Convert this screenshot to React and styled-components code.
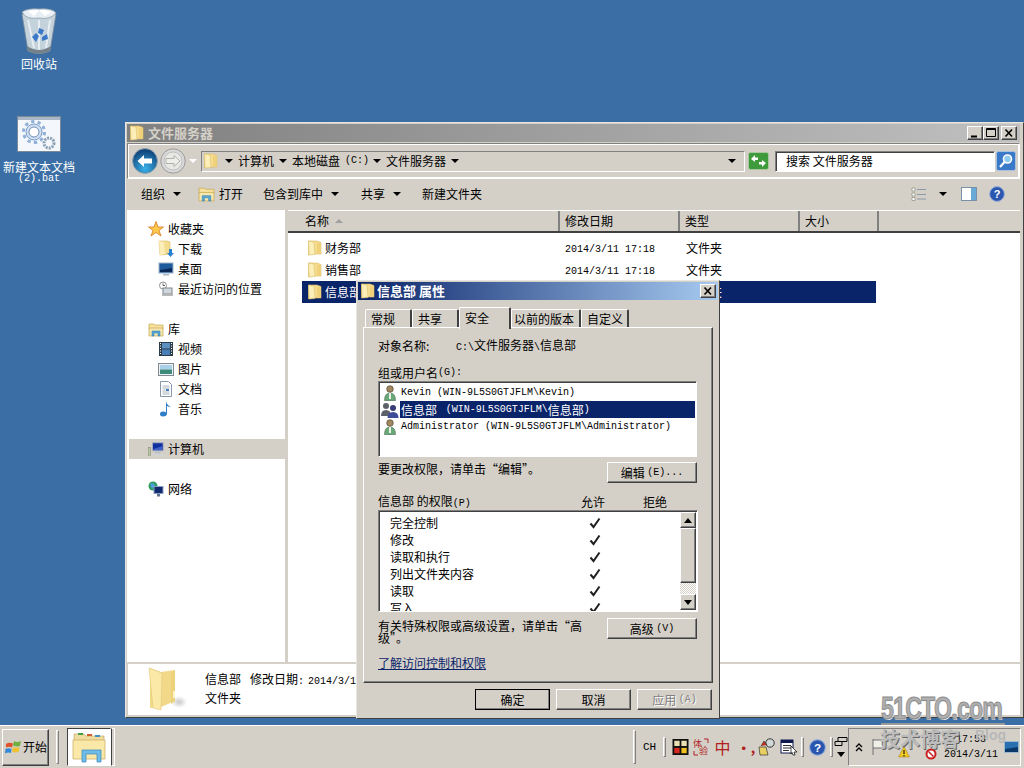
import React from "react";
import styled, { createGlobalStyle } from "styled-components";

const Global = createGlobalStyle`
  html, body { margin: 0; padding: 0; overflow: hidden; }
  * { box-sizing: border-box; }
  body { font-family: "Noto Sans CJK SC", "Liberation Sans", sans-serif; font-size: 12px; color: #000; }
`;

const FACE = "#d4d0c8";
const raised = `border: 1px solid; border-color: #fff #404040 #404040 #fff; box-shadow: inset -1px -1px 0 #808080;`;
const sunken = `border: 1px solid; border-color: #808080 #fff #fff #808080; box-shadow: inset 1px 1px 0 #404040;`;

const Desktop = styled.div`
  position: relative; width: 1024px; height: 768px; overflow: hidden; background: #3a6ea5;
  line-height: 14px;
`;
const Mono = styled.span`
  font-family: "Liberation Mono", monospace; font-size: 10px; white-space: pre;
`;
const Gap = styled.span`display: inline-block; width: ${p => p.$w}px; flex: none;`;
const DesktopIcon = styled.div`
  position: absolute; left: ${p => p.$x}px; top: ${p => p.$y}px; width: 76px;
  display: flex; flex-direction: column; align-items: center; color: #fff; line-height: 12px;
  text-align: center;
`;
const DesktopIconImage = styled.div`
  height: ${p => p.$h}px; display: flex; align-items: flex-start; justify-content: center;
`;

/* explorer */
const ExplorerWindow = styled.div`
  position: absolute; left: 125px; top: 122px; width: 899px; height: 596px;
  background: ${FACE}; padding: 1px 3px 2px 1px;
  border: 1px solid; border-color: #e8e6e0 #404040 #404040 #e8e6e0;
  display: flex; flex-direction: column;
`;
const TitleBar = styled.div`
  height: 18px; flex: none; display: flex; align-items: center; padding: 0 ${p => p.$pr ?? 2}px 0 2px; gap: ${p => p.$gap ?? 3}px;
  background: ${p => p.$active
    ? "linear-gradient(90deg,#0a246a,#a6caf0)"
    : "linear-gradient(90deg,#808080,#c0c0c0)"};
  color: ${p => p.$active ? "#fff" : FACE};
  font-size: 13px; font-weight: 700; letter-spacing: 0;
`;
const TitleText = styled.span`flex: 1; line-height: 16px; white-space: pre;`;
const CaptionGroup = styled.div`display: flex; gap: 0;`;
const CaptionButton = styled.div`
  width: 16px; height: 14px; background: ${FACE}; ${raised};
  display: flex; align-items: center; justify-content: center; margin-left: ${p => p.$gap || 0}px;
`;
const AddressBar = styled.div`
  height: 36px; flex: none; margin-top: 1px; display: flex; align-items: center; padding: 0 2px 0 4px;
  border: 1px solid; border-color: #808080 #fff #fff #808080;
  outline: 1px solid #fff; outline-offset: -2px;
`;
const NavGroup = styled.div`display: flex; align-items: center; width: 69px; flex: none;`;
const Crumbs = styled.div`
  width: 544px; height: 21px; flex: none; background: ${FACE}; display: flex; align-items: center;
  border: 1px solid; border-color: #808080 #fff #fff #808080; padding: 0 8px 0 1px;
`;
const CrumbItem = styled.span`
  display: flex; align-items: center; gap: 5px; margin-left: ${p => p.$ml || 0}px; white-space: pre;
`;
const Arrow = styled.i`
  display: inline-block; width: 0; height: 0; flex: none;
  border-left: 4px solid transparent; border-right: 4px solid transparent; border-top: 4px solid ${p => p.$c || "#000"};
`;
const Spring = styled.span`flex: 1;`;
const SearchBox = styled.div`
  width: 220px; height: 21px; flex: none; margin-left: 6px; background: #fff; ${sunken};
  display: flex; align-items: center; padding-left: 10px;
`;
const Toolbar = styled.div`
  height: 31px; flex: none; display: flex; align-items: center; padding: 0 0 2px 14px;
`;
const ToolItem = styled.div`
  display: flex; align-items: center; gap: ${p => p.$gap ?? 8}px; margin-right: ${p => p.$mr || 0}px;
`;
const Body = styled.div`flex: 1; display: flex; min-height: 0;`;
const Sidebar = styled.div`
  width: 158px; flex: none; background: #fff; padding-top: 9px; margin-right: 3px;
  display: flex; flex-direction: column;
`;
const NavRow = styled.div`
  height: 20px; flex: none; display: flex; align-items: center; gap: 4px;
  padding-left: ${p => p.$indent ? 31 : p.$selected ? 19 : 21}px;
  margin-top: ${p => p.$gap || 0}px;
  margin-left: ${p => p.$selected ? 2 : 0}px;
  background: ${p => p.$selected ? FACE : "transparent"};
`;
const NavIcon = styled.span`width: 16px; height: 16px; flex: none; display: flex; align-items: center;`;
const Main = styled.div`flex: 1; background: #fff; min-width: 0; display: flex; flex-direction: column;`;
const HeaderRow = styled.div`
  height: 22px; flex: none; display: flex; background: ${FACE}; border-bottom: 2px solid #404040;
  margin-top: 1px;
`;
const HeaderCell = styled.div`
  width: ${p => p.$w}px; flex: ${p => p.$w ? "none" : 1}; display: flex; align-items: center; gap: 6px;
  padding-left: ${p => p.$pl ?? 5}px; border-right: ${p => p.$w ? "2px solid #808080" : "none"};
`;
const SortMark = styled.i`
  width: 0; height: 0; border-left: 4px solid transparent; border-right: 4px solid transparent;
  border-bottom: 4px solid #a0a0a0;
`;
const Files = styled.div`padding: 4px 0 0 14px; display: flex; flex-direction: column; gap: 0;`;
const FileRow = styled.div`
  width: 574px; height: 22px; display: flex; align-items: center; padding-left: 5px;
  background: ${p => p.$selected ? "#0a246a" : "transparent"};
  color: ${p => p.$selected ? "#fff" : "#000"};
`;
const FileName = styled.div`width: 258px; display: flex; align-items: center; gap: 2px;`;
const FileDate = styled.div`width: 121px;`;
const Details = styled.div`
  height: 51px; flex: none; margin: 2px 0 0 1px; background: #fff; display: flex; padding-left: 20px; align-items: center;
`;
const DetailText = styled.div`
  margin-left: 17px; display: flex; flex-direction: column; gap: 2px; align-self: flex-start; margin-top: 8px;
`;

/* dialog */
const Dialog = styled.div`
  position: absolute; left: 356px; top: 280px; width: 364px; height: 439px;
  background: ${FACE}; padding: 1px; display: flex; flex-direction: column;
  border: 1px solid; border-color: #e8e6e0 #404040 #404040 #e8e6e0;
`;
const Tabs = styled.div`
  display: flex; align-items: flex-end; height: 27px; flex: none; padding-left: 7px; position: relative; z-index: 1;
`;
const Tab = styled.div`
  height: ${p => p.$active ? 22 : 18}px; flex: none; width: ${p => p.$w}px;
  background: ${FACE}; margin-bottom: ${p => p.$active ? -2 : 0}px;
  border: 1px solid #fff; border-bottom: none; border-right: 2px solid #404040; border-radius: 2px 2px 0 0;
  display: flex; justify-content: flex-start; align-items: ${p => p.$active ? "flex-start" : "center"};
  padding-left: ${p => p.$pl ?? 5}px;
  padding-top: ${p => p.$active ? 3 : 0}px;
`;
const Pane = styled.div`
  margin: 0 5px 0 5px; height: 356px; flex: none; padding: 10px 14px 0 14px;
  border: 1px solid; border-color: #fff #404040 #404040 #fff; box-shadow: inset -1px -1px 0 #808080;
  display: flex; flex-direction: column;
`;
const ObjectRow = styled.div`display: flex; height: 16px; align-items: center;`;
const ObjectLabel = styled.div`width: 78px;`;
const FieldLabel = styled.div`margin-top: ${p => p.$mt}px; height: 14px; display: flex; align-items: center;`;
const ListBox = styled.div`
  width: ${p => p.$w}px; height: ${p => p.$h}px; margin-top: ${p => p.$mt}px; background: #fff; ${sunken};
  flex: none; position: relative; overflow: hidden; display: flex;
`;
const UserList = styled.div`flex: 1; padding: 2px 1px 0 2px; display: flex; flex-direction: column;`;
const UserRow = styled.div`
  height: 17px; display: flex; align-items: center; flex: none;
`;
const UserIconCell = styled.div`width: 18px; flex: none; display: flex; justify-content: center;`;
const UserLabel = styled.div`
  flex: 1; height: 17px; display: flex; align-items: center; padding-left: 1px; margin-left: 1px; white-space: pre;
  background: ${p => p.$selected ? "#0a246a" : "transparent"};
  color: ${p => p.$selected ? "#fff" : "#000"};
`;
const ActionRow = styled.div`
  display: flex; justify-content: space-between; align-items: flex-start; margin-top: ${p => p.$mt}px; width: 319px;
`;
const Btn = styled.div`
  width: ${p => p.$w || 90}px; height: 21px; flex: none; background: ${FACE}; ${raised};
  display: flex; align-items: center; justify-content: center; white-space: pre;
  color: ${p => p.$disabled ? "#808080" : "#000"};
  text-shadow: ${p => p.$disabled ? "1px 1px 0 #fff" : "none"};
  outline: ${p => p.$default ? "1px solid #000" : "none"};
  outline-offset: -1px;
`;
const HintText = styled.div`width: 220px; line-height: 12px; padding-top: ${p => p.$pt || 0}px;`;
const PermHead = styled.div`
  display: flex; margin-top: 12px; height: 14px; align-items: center; width: 319px;
`;
const PermTitle = styled.div`width: 203px; flex: none;`;
const PermCol = styled.div`width: 62px; flex: none;`;
const PermList = styled.div`flex: 1; padding: 3px 0 0 11px; display: flex; flex-direction: column;`;
const PermRow = styled.div`
  height: 17px; flex: none; display: flex; align-items: center;
`;
const PermName = styled.div`width: 199px;`;
const Scroll = styled.div`
  width: 16px; flex: none; margin: 1px 1px 1px 0; display: flex; flex-direction: column;
  background: repeating-conic-gradient(#fff 0 25%, ${FACE} 0 50%) 0 0/2px 2px;
`;
const ScrollBtn = styled.div`
  width: 16px; height: 16px; flex: none; background: ${FACE}; ${raised};
  display: flex; align-items: center; justify-content: center;
`;
const ScrollThumb = styled.div`height: 55px; flex: none; background: ${FACE}; ${raised};`;
const ScrollTrack = styled.div`flex: 1;`;
const LinkText = styled.a`
  color: #0a246a; text-decoration: underline; margin-top: ${p => p.$mt}px; display: block; line-height: 14px;
`;
const DialogButtons = styled.div`
  display: flex; justify-content: flex-end; gap: 6px; margin-top: 6px; padding-right: 6px;
`;

/* taskbar */
const Taskbar = styled.div`
  position: absolute; left: 0; right: 0; bottom: 0; height: 43px; background: ${FACE};
  border-top: 1px solid #fff; display: flex; align-items: center; padding-left: 2px;
`;
const StartButton = styled.div`
  width: 47px; height: 37px; ${raised}; background: ${FACE}; display: flex; align-items: center; padding-left: 2px; gap: 1px;
`;
const Sep = styled.div`
  width: 3px; height: ${p => p.$h || 26}px; flex: none; margin: 0 ${p => p.$r || 0}px 0 ${p => p.$l || 0}px;
  border: 1px solid; border-color: #fff #808080 #808080 #fff;
`;
const TaskButton = styled.div`
  width: 44px; height: 38px; flex: none; background: #fff; display: flex; align-items: center; justify-content: center;
  border: 1px solid; border-color: #404040 #fff #fff #404040;
`;
const TaskEdge = styled.div`
  width: 4px; height: 38px; flex: none; border: 1px solid; border-color: #fff #fff #fff #404040;
`;
const TrayArea = styled.div`
  margin-left: auto; display: flex; align-items: center; height: 100%;
`;
const LangItem = styled.div`display: flex; align-items: center; justify-content: center; width: ${p => p.$w}px; flex: none;`;
const ImeText = styled.span`color: #b02020; font-size: ${p => p.$s}px; line-height: 1; font-weight: ${p => p.$b ? 700 : 400};`;
const CHLabel = styled(Mono)`font-size: 11px;`;
const Tray = styled.div`
  width: 173px; height: 38px; flex: none; margin-right: 3px; display: flex; position: relative; align-items: center; padding-left: 6px;
  border: 1px solid; border-color: #808080 #fff #fff #808080;
`;
const TrayBadge = styled.span`display: flex; margin-top: ${p => p.$mt}px; flex: none;`;
const Clock = styled.div`
  position: absolute; right: 22px; top: 4px; line-height: 14px; display: flex; flex-direction: column; align-items: center; gap: 1px;
`;
const ShowDesktopSlot = styled.span`position: absolute; right: 1px; top: 12px; display: flex;`;
const Watermark = styled.div`
  position: absolute; left: 881px; top: 691px; color: #b0b0b0; font-family: "Liberation Sans", sans-serif;
  font-weight: 700; font-size: 32px; line-height: 34px; letter-spacing: -1px;
  -webkit-text-stroke: 1px #8a8a8a; text-shadow: 1px 1px 0 #eee; transform: scaleX(.72); transform-origin: 0 0; white-space: nowrap;
`;
const WatermarkRule = styled.div`
  position: absolute; left: 881px; top: 723px; width: 124px; height: 2px; background: #999;
`;
const WatermarkSub = styled.div`
  position: absolute; left: 880px; top: 727px; color: #bcbcbc; font-size: 20px; font-weight: 700; line-height: 24px;
  text-shadow: 1px 1px 0 #666; white-space: nowrap;
`;
const WatermarkBlog = styled.div`
  position: absolute; left: 975px; top: 728px; color: #b8b8b8; font-size: 14px; font-weight: 700; font-family: "Liberation Sans", sans-serif; line-height: 14px;
`;

/* drawings */
const Folder = ({ s = 16 }) => (
  <svg width={s} height={s} viewBox="0 0 16 16" style={{ flex: "none" }}>
    <path d="M1.5 1 L10 1 L14 2.5 L14 14 L5 14 L1.5 15 Z" fill="#f4dc90" stroke="#d8b860" strokeWidth=".6" />
    <path d="M1.5 1 L7 2 L8 14.5 L2 15 Z" fill="#fbeeb8" stroke="#d8b860" strokeWidth=".5" />
    <path d="M10 3 L13.5 3 L13.5 13 L10 13Z" fill="#f0d078" />
  </svg>
);
const FolderArrow = () => (
  <svg width={16} height={18} viewBox="0 0 16 18">
    <path d="M1 1 L9 1 L12 2 L12 14 L2 15 Z" fill="#f4dc90" stroke="#d8b860" strokeWidth=".6" />
    <path d="M1 1 L6 2 L7 14 L2 15 Z" fill="#fbeeb8" />
    <path d="M11 9 h3 v4 h2 l-3.5 4 l-3.5 -4 h2z" fill="#2a80d0" />
  </svg>
);
const BigFolder = () => (
  <svg width={40} height={46} viewBox="0 0 40 46" style={{ flex: "none" }}>
    <defs>
      <radialGradient id="sh" cx=".5" cy=".5" r=".5"><stop offset="0" stopColor="#c8c8c8" /><stop offset="1" stopColor="#fff" /></radialGradient>
    </defs>
    <ellipse cx="31" cy="35" rx="8" ry="6" fill="url(#sh)" />
    <path d="M2 1 L13 5 L27 3 L27 34 L13 40 L2 41Z" fill="#f2d98a" />
    <path d="M1 1 L14 6 L13 43 L5 41 Z" fill="#fbe9a8" stroke="#e0c878" strokeWidth=".6" />
    <path d="M27 3 L27 34 L23 37 L23 6Z" fill="#ecd27c" />
    <rect x="25" y="24" width="2" height="7" fill="#fff3c8" />
  </svg>
);
const Recycle = () => (
  <svg width={38} height={48} viewBox="0 0 38 48">
    <path d="M2 6 L36 6 L30 43 Q19 48 8 43Z" fill="#c4d2dc" stroke="#7a8c98" strokeWidth=".8" />
    <path d="M2 4 Q8 0 19 1 Q32 0 36 5 Q30 12 19 10 Q6 12 2 4Z" fill="#e8eff4" stroke="#8fa0ac" strokeWidth=".8" />
    <path d="M8 3 l6 5 l5 -6 l6 6 l6 -4 l-6 -2 l-8 0z" fill="#fff" />
    <path d="M8 12 L14 40 M30 12 L26 40 M19 12 L19 42" stroke="#e6edf2" strokeWidth="2" />
    <path d="M7 38 Q19 46 31 38 L30 43 Q19 48 8 43Z" fill="#74808a" />
    <path d="M19 20 l5 2 l-2 5 l-4 -2z M12 29 l4 -4 l3 3 l-3 6z M22 29 l5 -3 l1 5 l-6 2z" fill="#3b78c8" />
  </svg>
);
const BatIcon = () => (
  <svg width={44} height={36} viewBox="0 0 44 36">
    <rect x=".5" y=".5" width="43" height="35" fill="#f4f7fb" stroke="#7a8a9a" />
    <rect x="1" y="1" width="42" height="3" fill="#a9b6c6" />
    <circle cx="17" cy="16" r="10.5" fill="none" stroke="#8fb0d8" strokeWidth="3" strokeDasharray="3.3 3.3" />
    <circle cx="17" cy="16" r="8" fill="#cfe0f2" stroke="#7f9fc8" />
    <circle cx="17" cy="16" r="5" fill="#fff" stroke="#7090b8" />
    <circle cx="32" cy="27" r="5" fill="none" stroke="#8aa0b4" strokeWidth="3" strokeDasharray="2 1" />
  </svg>
);
const Star = () => (
  <svg width={16} height={16} viewBox="0 0 16 16">
    <path d="M8 .5 L10 6 L15.5 6 L11 9.5 L13 15 L8 11.5 L3 15 L5 9.5 L.5 6 L6 6Z" fill="#fbc94c" stroke="#d97a1e" strokeWidth=".8" />
  </svg>
);
const Monitor = ({ s = 16 }) => (
  <svg width={s} height={s} viewBox="0 0 16 16">
    <rect x="1" y="2" width="14" height="10" fill="#1c5a9c" stroke="#9ab0c8" />
    <path d="M2 9 L14 7 L14 11 L2 11Z" fill="#0c2a58" />
    <rect x="5" y="13" width="6" height="1.5" fill="#a8b8c8" />
  </svg>
);
const Recent = () => (
  <svg width={16} height={16} viewBox="0 0 16 16">
    <circle cx="5" cy="4.5" r="3.5" fill="#fff" stroke="#909090" />
    <path d="M5 2.5 v2 h2" stroke="#606060" fill="none" />
    <rect x="5" y="7" width="9" height="6" fill="#d0d8de" stroke="#808890" />
    <rect x="4" y="13" width="11" height="2" fill="#b8b8b8" />
  </svg>
);
const Library = ({ s = 16 }) => (
  <svg width={s} height={s} viewBox="0 0 16 16">
    <path d="M1 3 h5 l1 1 h8 v4 H1z" fill="#f6e29e" stroke="#c8a850" strokeWidth=".7" />
    <path d="M1 7 h14 v8 H1z" fill="#f6e7ae" stroke="#c8a850" strokeWidth=".7" />
    <path d="M4 15 V10 h8 v5 h-2 v-3 H6 v3z" fill="#5aa8d8" stroke="#2a78b0" strokeWidth=".5" />
  </svg>
);
const Video = () => (
  <svg width={16} height={16} viewBox="0 0 16 16">
    <rect x="1" y="1" width="14" height="14" fill="#2c3c48" />
    <rect x="4" y="2" width="8" height="5.5" fill="#5c90c0" />
    <rect x="4" y="8.5" width="8" height="5.5" fill="#4a80b8" />
    <path d="M2 2.5 h1 M2 5 h1 M2 7.5 h1 M2 10 h1 M2 12.5 h1 M13 2.5 h1 M13 5 h1 M13 7.5 h1 M13 10 h1 M13 12.5 h1" stroke="#fff" />
  </svg>
);
const Picture = () => (
  <svg width={16} height={16} viewBox="0 0 16 16">
    <rect x=".5" y="2.5" width="15" height="12" fill="#eef2f6" stroke="#808890" />
    <rect x="2" y="4" width="12" height="4.5" fill="#a8d0e8" />
    <rect x="2" y="8.5" width="12" height="4.5" fill="#3c8a78" />
  </svg>
);
const Doc = () => (
  <svg width={16} height={16} viewBox="0 0 16 16">
    <path d="M2.5 .5 h8 l3 3 v12 h-11z" fill="#fff" stroke="#8898a8" />
    <path d="M4.5 5 h7 M4.5 7 h7 M4.5 9 h3 M4.5 11 h7 M4.5 13 h7" stroke="#a8b4c0" />
    <rect x="8" y="8" width="3" height="2" fill="#4080c0" />
  </svg>
);
const Music = () => (
  <svg width={16} height={16} viewBox="0 0 16 16">
    <path d="M8 .5 Q9 4 13 6 Q11 6 9 5 L9 12.5 Q9 15.5 5 15.5 Q2 15.5 2 13 Q2 10.5 5 10.5 Q7 10.5 8 11.5Z" fill="#2f7fc8" />
  </svg>
);
const Computer = () => (
  <svg width={16} height={16} viewBox="0 0 18 16">
    <rect x=".5" y="6" width="2.5" height="9" fill="#b8c8a8" stroke="#708060" strokeWidth=".5" />
    <rect x="5" y="1" width="12" height="9" fill="#1030a0" stroke="#a8b0c0" />
    <path d="M6 8 L16 5 L16 9 L6 9Z" fill="#4060c8" />
    <rect x="8" y="11" width="6" height="2" fill="#b8c0c8" />
    <rect x="5" y="13.5" width="12" height="1.5" fill="#d0d4d8" />
  </svg>
);
const Network = () => (
  <svg width={16} height={16} viewBox="0 0 16 16">
    <circle cx="5" cy="5" r="4.5" fill="#2f9a60" />
    <path d="M2 3 Q5 1 7 4 L4 8 Z" fill="#4aa0e0" />
    <rect x="6" y="5.5" width="9" height="7" fill="#10286c" stroke="#8aa0c8" />
    <rect x="9" y="13" width="3" height="2.5" fill="#607090" />
  </svg>
);
const UserIcon = () => (
  <svg width={14} height={16} viewBox="0 0 14 16">
    <circle cx="7" cy="4" r="3.3" fill="#a08860" stroke="#4a3a28" strokeWidth=".6" />
    <path d="M1.5 15.5 Q1.5 8 7 8 Q12.5 8 12.5 15.5Z" fill="#6aa878" stroke="#406848" strokeWidth=".6" />
    <path d="M6 8 h2 v6 h-2z" fill="#e8f0e8" />
  </svg>
);
const GroupIcon = () => (
  <svg width={18} height={16} viewBox="0 0 18 16">
    <circle cx="5" cy="4" r="3" fill="#5c6068" />
    <path d="M0 14 Q0 8 5 8 Q10 8 10 14Z" fill="#5c6068" />
    <circle cx="12" cy="6" r="3" fill="#383c78" />
    <path d="M6.5 16 Q6.5 10 12 10 Q17.5 10 17.5 16Z" fill="#3c4c98" />
  </svg>
);
const Check = () => (
  <svg width={12} height={12} viewBox="0 0 12 12">
    <path d="M1.5 6.5 L4.5 10 L10.5 1.5" fill="none" stroke="#202020" strokeWidth="2" />
  </svg>
);
const Tri = ({ up }) => (
  <svg width={8} height={5} viewBox="0 0 8 5"><path d={up ? "M0 5 L4 0 L8 5Z" : "M0 0 L8 0 L4 5Z"} /></svg>
);
const CaptionGlyph = ({ kind }) => (
  <svg width={10} height={10} viewBox="0 0 10 10" fill="none" stroke="#000">
    {kind === "min" && <path d="M1 8.5 h6" strokeWidth="2" />}
    {kind === "max" && <path d="M.5 .5 h9 v8 h-9z M.5 1.5 h9" />}
    {kind === "close" && <path d="M1.5 1.5 L8 8.5 M8 1.5 L1.5 8.5" strokeWidth="1.6" />}
  </svg>
);
const BackBtn = () => (
  <svg width={26} height={26} viewBox="0 0 26 26">
    <defs>
      <radialGradient id="bk" cx=".5" cy=".8" r=".8"><stop offset="0" stopColor="#3ab0e8" /><stop offset="1" stopColor="#0c3a70" /></radialGradient>
    </defs>
    <circle cx="13" cy="13" r="12.4" fill="url(#bk)" stroke="#8fa0b0" />
    <path d="M5.5 13 L12 7 V10.5 H20 V15.5 H12 V19Z" fill="#fff" />
  </svg>
);
const ForwardBtn = () => (
  <svg width={26} height={26} viewBox="0 0 26 26">
    <circle cx="13" cy="13" r="12.2" fill="#d8d8d8" stroke="#9a9a9a" />
    <circle cx="13" cy="13" r="9" fill="#e8e8e4" stroke="#c0c0c0" />
    <path d="M20 13 L14 7.5 V10.5 H6 V15.5 H14 V18.5Z" fill="#efefe9" stroke="#b0b0b0" />
  </svg>
);
const RefreshBtn = () => (
  <svg width={21} height={18} viewBox="0 0 21 18" style={{ marginLeft: 3, flex: "none" }}>
    <rect x=".5" y=".5" width="20" height="17" rx="2" fill="#3f9a3c" stroke="#a8c8a0" />
    <path d="M3 7 L7 3 L7 5.5 H10 V8 H7 V10Z M18 11 L14 15 L14 12.5 H11 V10 H14 V8Z" fill="#fff" />
  </svg>
);
const SearchBtn = () => (
  <svg width={20} height={20} viewBox="0 0 20 20" style={{ marginLeft: 1, flex: "none" }}>
    <rect x=".5" y=".5" width="19" height="19" rx="2" fill="#3a78c8" stroke="#a8c0e0" />
    <circle cx="11.5" cy="8" r="4" fill="#8ccaf0" stroke="#fff" strokeWidth="1.6" />
    <path d="M8.5 11 L4 16" stroke="#fff" strokeWidth="2.2" />
  </svg>
);
const ViewIcon = () => (
  <svg width={16} height={14} viewBox="0 0 16 14">
    <path d="M1 1h3v3H1z M1 6h3v3H1z M1 10.5h3v3H1z" fill="#fff" stroke="#8a8a7a" strokeWidth=".7" />
    <path d="M6 2.5h9M6 7.5h9M6 12h9" stroke="#8a9aaa" />
  </svg>
);
const PaneIcon = () => (
  <svg width={16} height={14} viewBox="0 0 16 14">
    <rect x=".5" y=".5" width="15" height="13" fill="#fff" stroke="#7890a8" />
    <rect x="10" y="1" width="5" height="12" fill="#6aaad8" />
  </svg>
);
const HelpIcon = ({ s = 16 }) => (
  <svg width={s} height={s} viewBox="0 0 16 16">
    <circle cx="8" cy="8" r="7.4" fill="#2a56b0" stroke="#9ab0d8" />
    <text x="8" y="12" textAnchor="middle" fontSize="11" fontWeight="700" fontFamily="Liberation Sans" fill="#fff">?</text>
  </svg>
);
const WinLogo = () => (
  <svg width={17} height={16} viewBox="0 0 17 16">
    <path d="M1 5 Q4 3 8 4.5 L7 8.5 Q4 7 1 8.5Z" fill="#e0502a" />
    <path d="M9 2 Q12 4 16 2 L15 7 Q12 8 8 6.5Z" fill="#70b040" />
    <path d="M.5 10 Q3.5 8.5 6.5 10 L6 14 Q3 13 0 14.5Z" fill="#3088d8" />
    <path d="M8 8 Q11 9.5 14.5 8 L13.5 13 Q10 14 7 12.5Z" fill="#f0c030" />
  </svg>
);
const ExplorerTask = () => (
  <svg width={34} height={32} viewBox="0 0 34 32">
    <path d="M2 3 h10 l2 2 h18 v6 H2z" fill="#f0dca0" stroke="#b8a060" strokeWidth=".6" />
    <rect x="6" y="2" width="5" height="2" fill="#40a040" />
    <rect x="15" y="3" width="5" height="2" fill="#d06030" />
    <rect x="23" y="4" width="5" height="2" fill="#4090c0" />
    <path d="M1 9 H33 V28 H1z" fill="#fae8a8" stroke="#c8a860" strokeWidth=".7" />
    <path d="M10 31 V19 H29 V31 H25 V23 H14 V31Z" fill="#70bce8" stroke="#3888b8" strokeWidth=".7" />
  </svg>
);
const ImePy = () => (
  <svg width={17} height={16} viewBox="0 0 18 18">
    <rect width="18" height="18" fill="#111" />
    <path d="M2 2h6v6H2z M10 2h6v6h-6z" fill="#e8e0b0" />
    <path d="M2 10h6v6H2z" fill="#d82820" />
    <path d="M10 10h6v6h-6z" fill="#f0c020" />
  </svg>
);
const ImeMode = () => (
  <svg width={16} height={18} viewBox="0 0 16 18" style={{ flex: "none" }}>
    <path d="M11 1 h4 v4 M1 13 v4 h4" fill="none" stroke="#b02020" />
    <text x="0" y="9" fontSize="9" fill="#b02020" fontFamily="Noto Sans CJK SC">体</text>
    <text x="6" y="16" fontSize="9" fill="#b02020" fontFamily="Noto Sans CJK SC">验</text>
  </svg>
);
const ImeTool = () => (
  <svg width={18} height={18} viewBox="0 0 18 18">
    <path d="M1 9 h7 l2 8 H2z" fill="#e8d060" stroke="#333" strokeWidth=".7" />
    <circle cx="12" cy="5" r="4.2" fill="#d0d8d8" stroke="#333" />
    <path d="M3 8 l3 -5 l3 4" fill="#c03020" stroke="#333" strokeWidth=".6" />
  </svg>
);
const ImeCursor = () => (
  <svg width={18} height={18} viewBox="0 0 18 18">
    <rect x="1" y="2" width="12" height="13" fill="#fff" stroke="#101850" />
    <rect x="1" y="2" width="12" height="3" fill="#101850" />
    <path d="M3 7.5h8M3 10h8M3 12.5h6" stroke="#333" />
    <path d="M11 8 L17 14 L14 14 L15 17 L13 17 L12 14.5 L11 16Z" fill="#fff" stroke="#000" strokeWidth=".7" />
  </svg>
);
const Flag = () => (
  <svg width={14} height={18} viewBox="0 0 14 18" style={{ flex: "none" }}>
    <path d="M2 1 V17 M2 2 H13 L11 6 L13 10 H2" fill="#f0efe8" stroke="#707070" />
  </svg>
);
const Warn = () => (
  <svg width={12} height={12} viewBox="0 0 12 12">
    <path d="M6 .5 L11.5 11 H.5Z" fill="#f0c828" stroke="#a08010" strokeWidth=".5" />
    <path d="M6 4v4M6 9v1.5" stroke="#000" />
  </svg>
);
const NoSign = () => (
  <svg width={12} height={12} viewBox="0 0 12 12">
    <circle cx="6" cy="6" r="4.5" fill="#fff" stroke="#c82020" strokeWidth="2" />
    <path d="M3.5 3.5 L8.5 8.5" stroke="#c82020" strokeWidth="1.5" />
  </svg>
);
const ShowDesktop = () => (
  <svg width={15} height={12} viewBox="0 0 15 12">
    <rect x=".5" y=".5" width="14" height="11" fill="#2a70b0" stroke="#9ab8d0" />
    <path d="M1 8 L14 6 V11 H1Z" fill="#0a3868" />
  </svg>
);
const WindowsTile = () => (
  <svg width={14} height={10} viewBox="0 0 14 10" fill="none" stroke="#000">
    <path d="M4 .5h9v4h-9z M1 4.5h7v4H1z" fill="#d4d0c8" />
  </svg>
);
const DoubleUp = () => (
  <svg width={8} height={9} viewBox="0 0 8 9" fill="none" stroke="#000" strokeWidth="1.3" style={{ flex: "none" }}>
    <path d="M1 4 L4 1 L7 4 M1 8 L4 5 L7 8" />
  </svg>
);
const Stack = styled.div`display: flex; flex-direction: column; align-items: center; gap: 5px; width: 15px; flex: none;`;

const NAV = [
  [<Star />, "收藏夹", false, 0],
  [<FolderArrow />, "下载", true, 0],
  [<Monitor />, "桌面", true, 0],
  [<Recent />, "最近访问的位置", true, 0],
  [<Library />, "库", false, 20],
  [<Video />, "视频", true, 0],
  [<Picture />, "图片", true, 0],
  [<Doc />, "文档", true, 0],
  [<Music />, "音乐", true, 0],
  [<Computer />, "计算机", false, 20, true],
  [<Network />, "网络", false, 20],
];
const FILES = [["财务部"], ["销售部"], ["信息部", true]];
const PERMS = ["完全控制", "修改", "读取和执行", "列出文件夹内容", "读取", "写入"];

export default function App() {
  return (
    <Desktop>
      <Global />
      <DesktopIcon $x={1} $y={8}>
        <DesktopIconImage $h={50}><Recycle /></DesktopIconImage>
        回收站
      </DesktopIcon>
      <DesktopIcon $x={1} $y={116}>
        <DesktopIconImage $h={45}><BatIcon /></DesktopIconImage>
        新建文本文档
        <Mono>(2).bat</Mono>
      </DesktopIcon>

      <ExplorerWindow>
        <TitleBar $pr={3}>
          <Folder />
          <TitleText>文件服务器</TitleText>
          <CaptionGroup>
            <CaptionButton><CaptionGlyph kind="min" /></CaptionButton>
            <CaptionButton><CaptionGlyph kind="max" /></CaptionButton>
            <CaptionButton $gap={2}><CaptionGlyph kind="close" /></CaptionButton>
          </CaptionGroup>
        </TitleBar>
        <AddressBar>
          <NavGroup>
            <BackBtn />
            <Gap $w={2} />
            <ForwardBtn />
            <Gap $w={3} />
            <Arrow $c="#fff" />
          </NavGroup>
          <Crumbs>
            <Folder />
            <CrumbItem $ml={6}><Arrow />计算机</CrumbItem>
            <CrumbItem $ml={5}><Arrow />本地磁盘<Mono>(C:)</Mono></CrumbItem>
            <CrumbItem $ml={4}><Arrow />文件服务器</CrumbItem>
            <CrumbItem $ml={5}><Arrow /></CrumbItem>
            <Spring />
            <Arrow />
          </Crumbs>
          <RefreshBtn />
          <SearchBox>搜索 文件服务器</SearchBox>
          <SearchBtn />
        </AddressBar>
        <Toolbar>
          <ToolItem $mr={17}>组织 <Arrow /></ToolItem>
          <ToolItem $gap={4} $mr={20}><Library s={17} />打开</ToolItem>
          <ToolItem $mr={22}>包含到库中 <Arrow /></ToolItem>
          <ToolItem $mr={21}>共享 <Arrow /></ToolItem>
          <ToolItem>新建文件夹</ToolItem>
          <Spring />
          <ToolItem $gap={12} $mr={14}><ViewIcon /><Arrow /></ToolItem>
          <ToolItem $mr={12}><PaneIcon /></ToolItem>
          <ToolItem $mr={15}><HelpIcon /></ToolItem>
        </Toolbar>
        <Body>
          <Sidebar>
            {NAV.map(([icon, label, indent, gap, selected]) => (
              <NavRow key={label} $indent={indent} $gap={gap} $selected={selected}>
                <NavIcon>{icon}</NavIcon>{label}
              </NavRow>
            ))}
          </Sidebar>
          <Main>
            <HeaderRow>
              <HeaderCell $w={272} $pl={17}>名称 <SortMark /></HeaderCell>
              <HeaderCell $w={120}>修改日期</HeaderCell>
              <HeaderCell $w={120}>类型</HeaderCell>
              <HeaderCell $w={79}>大小</HeaderCell>
              <HeaderCell />
            </HeaderRow>
            <Files>
              {FILES.map(([name, sel]) => (
                <FileRow key={name} $selected={sel}>
                  <FileName><Folder />{name}</FileName>
                  <FileDate><Mono>2014/3/11 17:18</Mono></FileDate>
                  <span>文件夹</span>
                </FileRow>
              ))}
            </Files>
          </Main>
        </Body>
        <Details>
          <BigFolder />
          <DetailText>
            <span>信息部<Gap $w={9} />修改日期<Mono>:</Mono><Gap $w={4} /><Mono>2014/3/11 17:18</Mono></span>
            <span>文件夹</span>
          </DetailText>
        </Details>
      </ExplorerWindow>

      <Dialog>
        <TitleBar $active $gap={1}>
          <Folder />
          <TitleText>信息部 属性</TitleText>
          <CaptionButton><CaptionGlyph kind="close" /></CaptionButton>
        </TitleBar>
        <Tabs>
          <Tab $w={47}>常规</Tab>
          <Tab $w={47}>共享</Tab>
          <Tab $w={52} $active>安全</Tab>
          <Tab $w={70} $pl={2}>以前的版本</Tab>
          <Tab $w={48}>自定义</Tab>
        </Tabs>
        <Pane>
          <ObjectRow>
            <ObjectLabel>对象名称:</ObjectLabel>
            <span><Mono>C:\</Mono>文件服务器<Mono>\</Mono>信息部</span>
          </ObjectRow>
          <FieldLabel $mt={12}>组或用户名<Mono>(G):</Mono></FieldLabel>
          <ListBox $w={319} $h={76} $mt={1}>
            <UserList>
              <UserRow>
                <UserIconCell><UserIcon /></UserIconCell>
                <UserLabel><Mono>Kevin (WIN-9L5S0GTJFLM\Kevin)</Mono></UserLabel>
              </UserRow>
              <UserRow>
                <UserIconCell><GroupIcon /></UserIconCell>
                <UserLabel $selected>信息部 <Mono> (WIN-9L5S0GTJFLM\</Mono>信息部<Mono>)</Mono></UserLabel>
              </UserRow>
              <UserRow>
                <UserIconCell><UserIcon /></UserIconCell>
                <UserLabel><Mono>Administrator (WIN-9L5S0GTJFLM\Administrator)</Mono></UserLabel>
              </UserRow>
            </UserList>
          </ListBox>
          <ActionRow $mt={5}>
            <HintText $pt={1}>{"要更改权限\uFF0C请单击“编辑”。"}</HintText>
            <Btn>编辑 <Mono>(E)...</Mono></Btn>
          </ActionRow>
          <PermHead>
            <PermTitle>信息部 的权限<Mono>(P)</Mono></PermTitle>
            <PermCol>允许</PermCol>
            <PermCol>拒绝</PermCol>
          </PermHead>
          <ListBox $w={320} $h={102} $mt={1}>
            <PermList>
              {PERMS.map(p => (
                <PermRow key={p}>
                  <PermName>{p}</PermName>
                  <Check />
                </PermRow>
              ))}
            </PermList>
            <Scroll>
              <ScrollBtn><Tri up /></ScrollBtn>
              <ScrollThumb />
              <ScrollTrack />
              <ScrollBtn><Tri /></ScrollBtn>
            </Scroll>
          </ListBox>
          <ActionRow $mt={6}>
            <HintText $pt={2}>{"有关特殊权限或高级设置\uFF0C请单击“高级”。"}</HintText>
            <Btn>高级 <Mono>(V)</Mono></Btn>
          </ActionRow>
          <LinkText $mt={12}>了解访问控制和权限</LinkText>
        </Pane>
        <DialogButtons>
          <Btn $w={75} $default>确定</Btn>
          <Btn $w={75}>取消</Btn>
          <Btn $w={75} $disabled>应用 <Mono>(A)</Mono></Btn>
        </DialogButtons>
      </Dialog>

      <Taskbar>
        <StartButton><WinLogo />开始</StartButton>
        <Sep $h={34} $l={7} $r={8} />
        <TaskButton><ExplorerTask /></TaskButton>
        <TaskEdge />
        <TrayArea>
          <Sep $h={34} />
          <LangItem $w={27}><CHLabel>CH</CHLabel></LangItem>
          <Sep $h={20} />
          <LangItem $w={28}><ImePy /></LangItem>
          <LangItem $w={14}><ImeMode /></LangItem>
          <LangItem $w={29}><ImeText $s={16}>中</ImeText></LangItem>
          <LangItem $w={18}><ImeText $s={14} $b>·,</ImeText></LangItem>
          <LangItem $w={24}><ImeTool /></LangItem>
          <LangItem $w={20}><ImeCursor /></LangItem>
          <Sep $h={20} $l={2} />
          <LangItem $w={26}><HelpIcon s={17} /></LangItem>
          <Sep $h={20} />
          <Stack><WindowsTile /><Tri /></Stack>
          <Tray>
            <DoubleUp />
            <Gap $w={8} />
            <Flag />
            <Gap $w={13} />
            <TrayBadge $mt={10}><Warn /></TrayBadge>
            <Gap $w={15} />
            <TrayBadge $mt={14}><NoSign /></TrayBadge>
            <Clock>
              <Mono>17:53</Mono>
              <Mono>2014/3/11</Mono>
            </Clock>
            <ShowDesktopSlot><ShowDesktop /></ShowDesktopSlot>
          </Tray>
        </TrayArea>
      </Taskbar>

      <Watermark>51CTO.com</Watermark>
      <WatermarkRule />
      <WatermarkSub>技术博客</WatermarkSub>
      <WatermarkBlog>Blog</WatermarkBlog>
    </Desktop>
  );
}
